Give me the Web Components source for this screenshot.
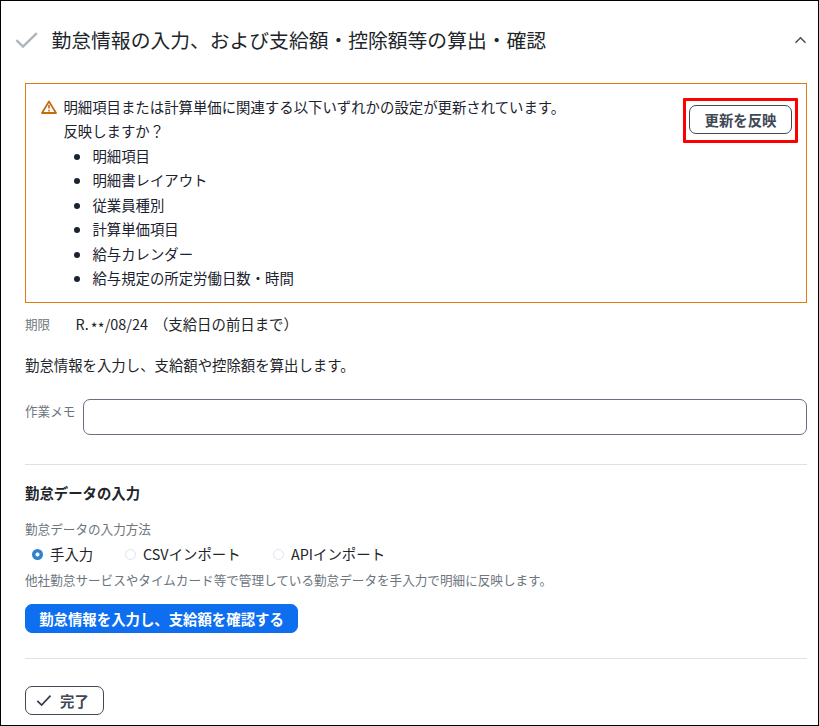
<!DOCTYPE html>
<html lang="ja">
<head>
<meta charset="utf-8">
<title>勤怠情報の入力</title>
<style>
html,body{margin:0;height:100%;background:#fff}
body{font:14.4px/24.48px "Noto Sans CJK JP",sans-serif;color:#212529}
</style>
</head>
<body>
<task-panel>
  <panel-heading slot="heading">勤怠情報の入力、および支給額・控除額等の算出・確認</panel-heading>
  <update-alert>
    <span>明細項目または計算単価に関連する以下いずれかの設定が更新されています。</span>
    <span>反映しますか？</span>
    <alert-item slot="items">明細項目</alert-item>
    <alert-item slot="items">明細書レイアウト</alert-item>
    <alert-item slot="items">従業員種別</alert-item>
    <alert-item slot="items">計算単価項目</alert-item>
    <alert-item slot="items">給与カレンダー</alert-item>
    <alert-item slot="items">給与規定の所定労働日数・時間</alert-item>
    <push-button slot="action" style="width:103px">更新を反映</push-button>
  </update-alert>
  <due-date label="期限">R.<span slot="mask">**</span><span slot="date">/08/24</span><span slot="note">（支給日の前日まで）</span></due-date>
  <text-line style="margin-top:17px">勤怠情報を入力し、支給額や控除額を算出します。</text-line>
  <memo-field label="作業メモ"></memo-field>
  <rule-line style="margin-top:29px"></rule-line>
  <text-line style="margin-top:16px;font-weight:700">勤怠データの入力</text-line>
  <text-line small style="margin-top:12px">勤怠データの入力方法</text-line>
  <radio-group>
    <radio-option checked style="width:93px">手入力</radio-option>
    <radio-option style="width:148px">CSVインポート</radio-option>
    <radio-option>APIインポート</radio-option>
  </radio-group>
  <text-line small style="margin-top:2px">他社勤怠サービスやタイムカード等で管理している勤怠データを手入力で明細に反映します。</text-line>
  <push-button primary style="width:273px;margin-top:12px">勤怠情報を入力し、支給額を確認する</push-button>
  <rule-line style="margin-top:25px"></rule-line>
  <push-button style="width:79px;margin-top:27px;padding-right:4px"><check-icon slot="icon"></check-icon>完了</push-button>
</task-panel>
<script>
const define = (name, html, setup) => customElements.define(name, class extends HTMLElement {
  constructor() {
    super();
    this.attachShadow({ mode: 'open' }).innerHTML = html;
  }
  connectedCallback() { if (setup) setup(this, this.shadowRoot); }
});
const setLabel = (host, root) => { root.querySelector('.label').textContent = host.getAttribute('label'); };

define('task-panel', `
<style>
:host{display:block;box-sizing:border-box;height:726px;border:1px solid #000;overflow:hidden;background:#fff}
main{display:flex;flex-direction:column;align-items:stretch;padding:0 11px 0 24px}
</style>
<slot name="heading"></slot><main><slot></slot></main>`);

define('panel-heading', `
<style>
:host{display:flex;align-items:center;height:82px;box-sizing:border-box;padding:0 11px 4px 14px;font-size:19.8px;line-height:30px}
.title{flex:1;padding-left:13.5px}
svg{display:block}
</style>
<svg width="23" height="17" viewBox="0 0 23 17" fill="none" stroke="#adb5bd" stroke-width="2.4"><path d="M1.4 8.2 8 14.6 21.8 1.2"/></svg>
<div class="title"><slot></slot></div>
<svg width="13" height="8" viewBox="0 0 13 8" fill="none" stroke="#414955" stroke-width="1.4"><path d="M1.5 6.8 6.5 1.8 11.5 6.8"/></svg>`);

define('update-alert', `
<style>
:host{display:flex;align-items:flex-start;box-sizing:border-box;height:220px;border:1px solid #e07b12;padding:11px 8px 0 15px;color:#1b2230}
svg{flex:none;margin:5px 6.4px 0 0}
.body{flex:1}
.message{display:flex;flex-direction:column}
.mark{margin-top:3px;width:115px;height:45px;box-sizing:border-box;border:3px solid #f00;border-radius:1px;padding:4px 3px 0}
</style>
<svg width="16" height="14" viewBox="0 0 16 14" fill="none" stroke="#c66a12"><path d="M8 1.4 15 13H1Z" stroke-width="1.8" stroke-linejoin="round"/><path d="M8 4.8V8.6M8 9.8V11.5" stroke-width="1.6"/></svg>
<div class="body"><div class="message"><slot></slot></div><slot name="items"></slot></div>
<div class="mark"><slot name="action"></slot></div>`);

define('alert-item', `
<style>
:host{display:flex;align-items:center;padding-left:10.6px}
i{width:6px;height:6px;border-radius:50%;background:#1b2230;margin:1px 12.4px 0 0}
</style><i></i><slot></slot>`);

define('push-button', `
<style>
:host{display:flex;align-items:center;justify-content:center;box-sizing:border-box;height:29px;border:1px solid #414955;border-radius:7px;color:#414955;background:#fff;font-weight:700;line-height:27px;white-space:nowrap}
:host([primary]){background:#0d6ff0;border-color:#0d6ff0;color:#fff}
</style><slot name="icon"></slot><span><slot></slot></span>`);

define('check-icon', `
<style>:host{display:block;margin-right:8px}svg{display:block}</style>
<svg width="16" height="13" viewBox="0 0 16 13" fill="none" stroke="#333b46" stroke-width="1.7"><path d="M1.3 6.8 5.6 11 14.5 1.7"/></svg>`);

define('due-date', `
<style>
:host{display:flex;margin-top:9px;white-space:nowrap}
.label{width:50.5px;font-size:12.6px;color:#6c757d}
.mask{display:block;margin:4px 0 0 2px;height:20px;letter-spacing:.3px}
.note{margin-left:6px}
</style><span class="label"></span><span><slot></slot></span><span class="mask"><slot name="mask"></slot></span><span><slot name="date"></slot></span><span class="note"><slot name="note"></slot></span>`, setLabel);

define('text-line', `
<style>:host{display:block;height:24px;line-height:24px;white-space:nowrap}:host([small]){font-size:12.6px;color:#6c757d}</style><slot></slot>`);

define('memo-field', `
<style>
:host{display:flex;margin-top:22px}
.label{width:58px;font-size:12.6px;color:#6c757d;white-space:nowrap}
input{flex:1;box-sizing:border-box;height:36px;min-width:0;border:1px solid #667080;border-radius:7px;background:#fff;padding:0 10px;font:inherit;outline:0}
</style><span class="label"></span><input type="text">`, setLabel);

define('rule-line', `<style>:host{display:block;height:1px;background:#dee0e3}</style>`);

define('radio-group', `<style>:host{display:flex;height:24px;padding-left:7px;margin-top:1px}</style><slot></slot>`);

define('radio-option', `
<style>
:host{display:flex;align-items:center;line-height:24px;white-space:nowrap}
i{flex:none;box-sizing:border-box;width:11px;height:11px;border:1px solid #e0e4ed;border-radius:50%;background:#fff;margin-right:7px}
:host([checked]) i{border:0;background:radial-gradient(circle,#fff 1.6px,#3182ce 2.4px)}
</style><i></i><slot></slot>`);
</script>
</body>
</html>
